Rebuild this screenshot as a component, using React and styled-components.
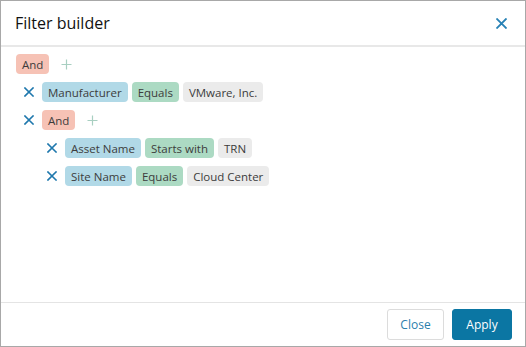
import styled, { createGlobalStyle } from "styled-components";

const GlobalStyle = createGlobalStyle`
  html, body {
    margin: 0;
    padding: 0;
    background: #ffffff;
  }
  body {
    font-family: "Open Sans", "Liberation Sans", sans-serif;
  }
`;

const Dialog = styled.div`
  box-sizing: border-box;
  width: 526px;
  height: 347px;
  border: 1px solid #a8a8a8;
  background: #fff;
  display: flex;
  flex-direction: column;
`;

const Header = styled.div`
  height: 44px;
  flex: none;
  display: flex;
  align-items: center;
  justify-content: space-between;
  padding: 0 14px 0 14px;
  border-bottom: 2px solid #e8e8e8;
`;

const Title = styled.h1`
  margin: 0;
  font-size: 16px;
  font-weight: 500;
  color: #111111;
`;

const IconButton = styled.button`
  border: 0;
  background: none;
  padding: 0;
  display: flex;
  align-items: center;
  justify-content: center;
  width: ${(p) => p.$size}px;
  height: ${(p) => p.$size}px;
  cursor: pointer;
`;

const Body = styled.div`
  flex: 1;
  padding: 3px 14px 0 14px;
  display: flex;
  flex-direction: column;
`;

const Row = styled.div`
  height: 28px;
  display: flex;
  align-items: center;
  gap: 4px;
  padding-left: ${(p) => p.$indent}px;
`;

const RemoveSlot = styled.div`
  width: 10px;
  margin-left: -15px;
  margin-right: 4px;
  display: flex;
  align-items: center;
  justify-content: center;
`;

const Chip = styled.span`
  box-sizing: border-box;
  height: 20px;
  display: inline-flex;
  align-items: center;
  padding: 0 6px;
  border-radius: 4px;
  font-size: 11.5px;
  color: #3c3c3c;
  white-space: nowrap;
  background: ${(p) => p.$bg};
`;

const AddSlot = styled.div`
  margin-left: 8px;
  display: flex;
  align-items: center;
`;

const Footer = styled.div`
  height: 43px;
  flex: none;
  border-top: 1px solid #e4e4e4;
  display: flex;
  align-items: center;
  justify-content: flex-end;
  gap: 8px;
  padding-right: 13px;
`;

const Button = styled.button`
  box-sizing: border-box;
  height: 31px;
  min-width: ${(p) => p.$w}px;
  padding: 0 12px;
  border-radius: 3px;
  font-family: "Open Sans", "Liberation Sans", sans-serif;
  font-size: 12px;
  cursor: pointer;
  border: 1px solid ${(p) => (p.$primary ? "#0b76a3" : "#dcdcdc")};
  background: ${(p) => (p.$primary ? "#0b76a3" : "#ffffff")};
  color: ${(p) => (p.$primary ? "#ffffff" : "#2b80ad")};
`;

const colors = {
  group: "#f6c2b5",
  field: "#b1d9e7",
  op: "#acdac3",
  value: "#ebebeb",
};

const Cross = ({ size = 10, color = "#1f78ad", width = 1.6 }) => (
  <svg width={size} height={size} viewBox="0 0 10 10">
    <path d="M1 1 L9 9 M9 1 L1 9" stroke={color} strokeWidth={width} strokeLinecap="square" fill="none" />
  </svg>
);

const Plus = () => (
  <svg width="11" height="11" viewBox="0 0 11 11">
    <path d="M5.5 0.5 V10.5 M0.5 5.5 H10.5" stroke="#a8cfc1" strokeWidth="1.2" fill="none" />
  </svg>
);

const rows = [
  { level: 0, group: true },
  { level: 1, chips: [["field", "Manufacturer"], ["op", "Equals"], ["value", "VMware, Inc."]] },
  { level: 1, group: true },
  { level: 2, chips: [["field", "Asset Name"], ["op", "Starts with"], ["value", "TRN"]] },
  { level: 2, chips: [["field", "Site Name"], ["op", "Equals"], ["value", "Cloud Center"]] },
];

export default function App() {
  return (
    <>
      <GlobalStyle />
      <Dialog>
        <Header>
          <Title>Filter builder</Title>
          <IconButton $size={20}>
            <Cross size={11} color="#2781b5" width={1.7} />
          </IconButton>
        </Header>
        <Body>
          {rows.map((r, i) => (
            <Row key={i} $indent={1 + r.level * 23}>
              {r.level > 0 && (
                <RemoveSlot>
                  <Cross />
                </RemoveSlot>
              )}
              {r.group ? (
                <>
                  <Chip $bg={colors.group}>And</Chip>
                  <AddSlot>
                    <Plus />
                  </AddSlot>
                </>
              ) : (
                r.chips.map(([kind, text]) => (
                  <Chip key={text} $bg={colors[kind]}>
                    {text}
                  </Chip>
                ))
              )}
            </Row>
          ))}
        </Body>
        <Footer>
          <Button $w={57}>Close</Button>
          <Button $primary $w={60}>Apply</Button>
        </Footer>
      </Dialog>
    </>
  );
}
